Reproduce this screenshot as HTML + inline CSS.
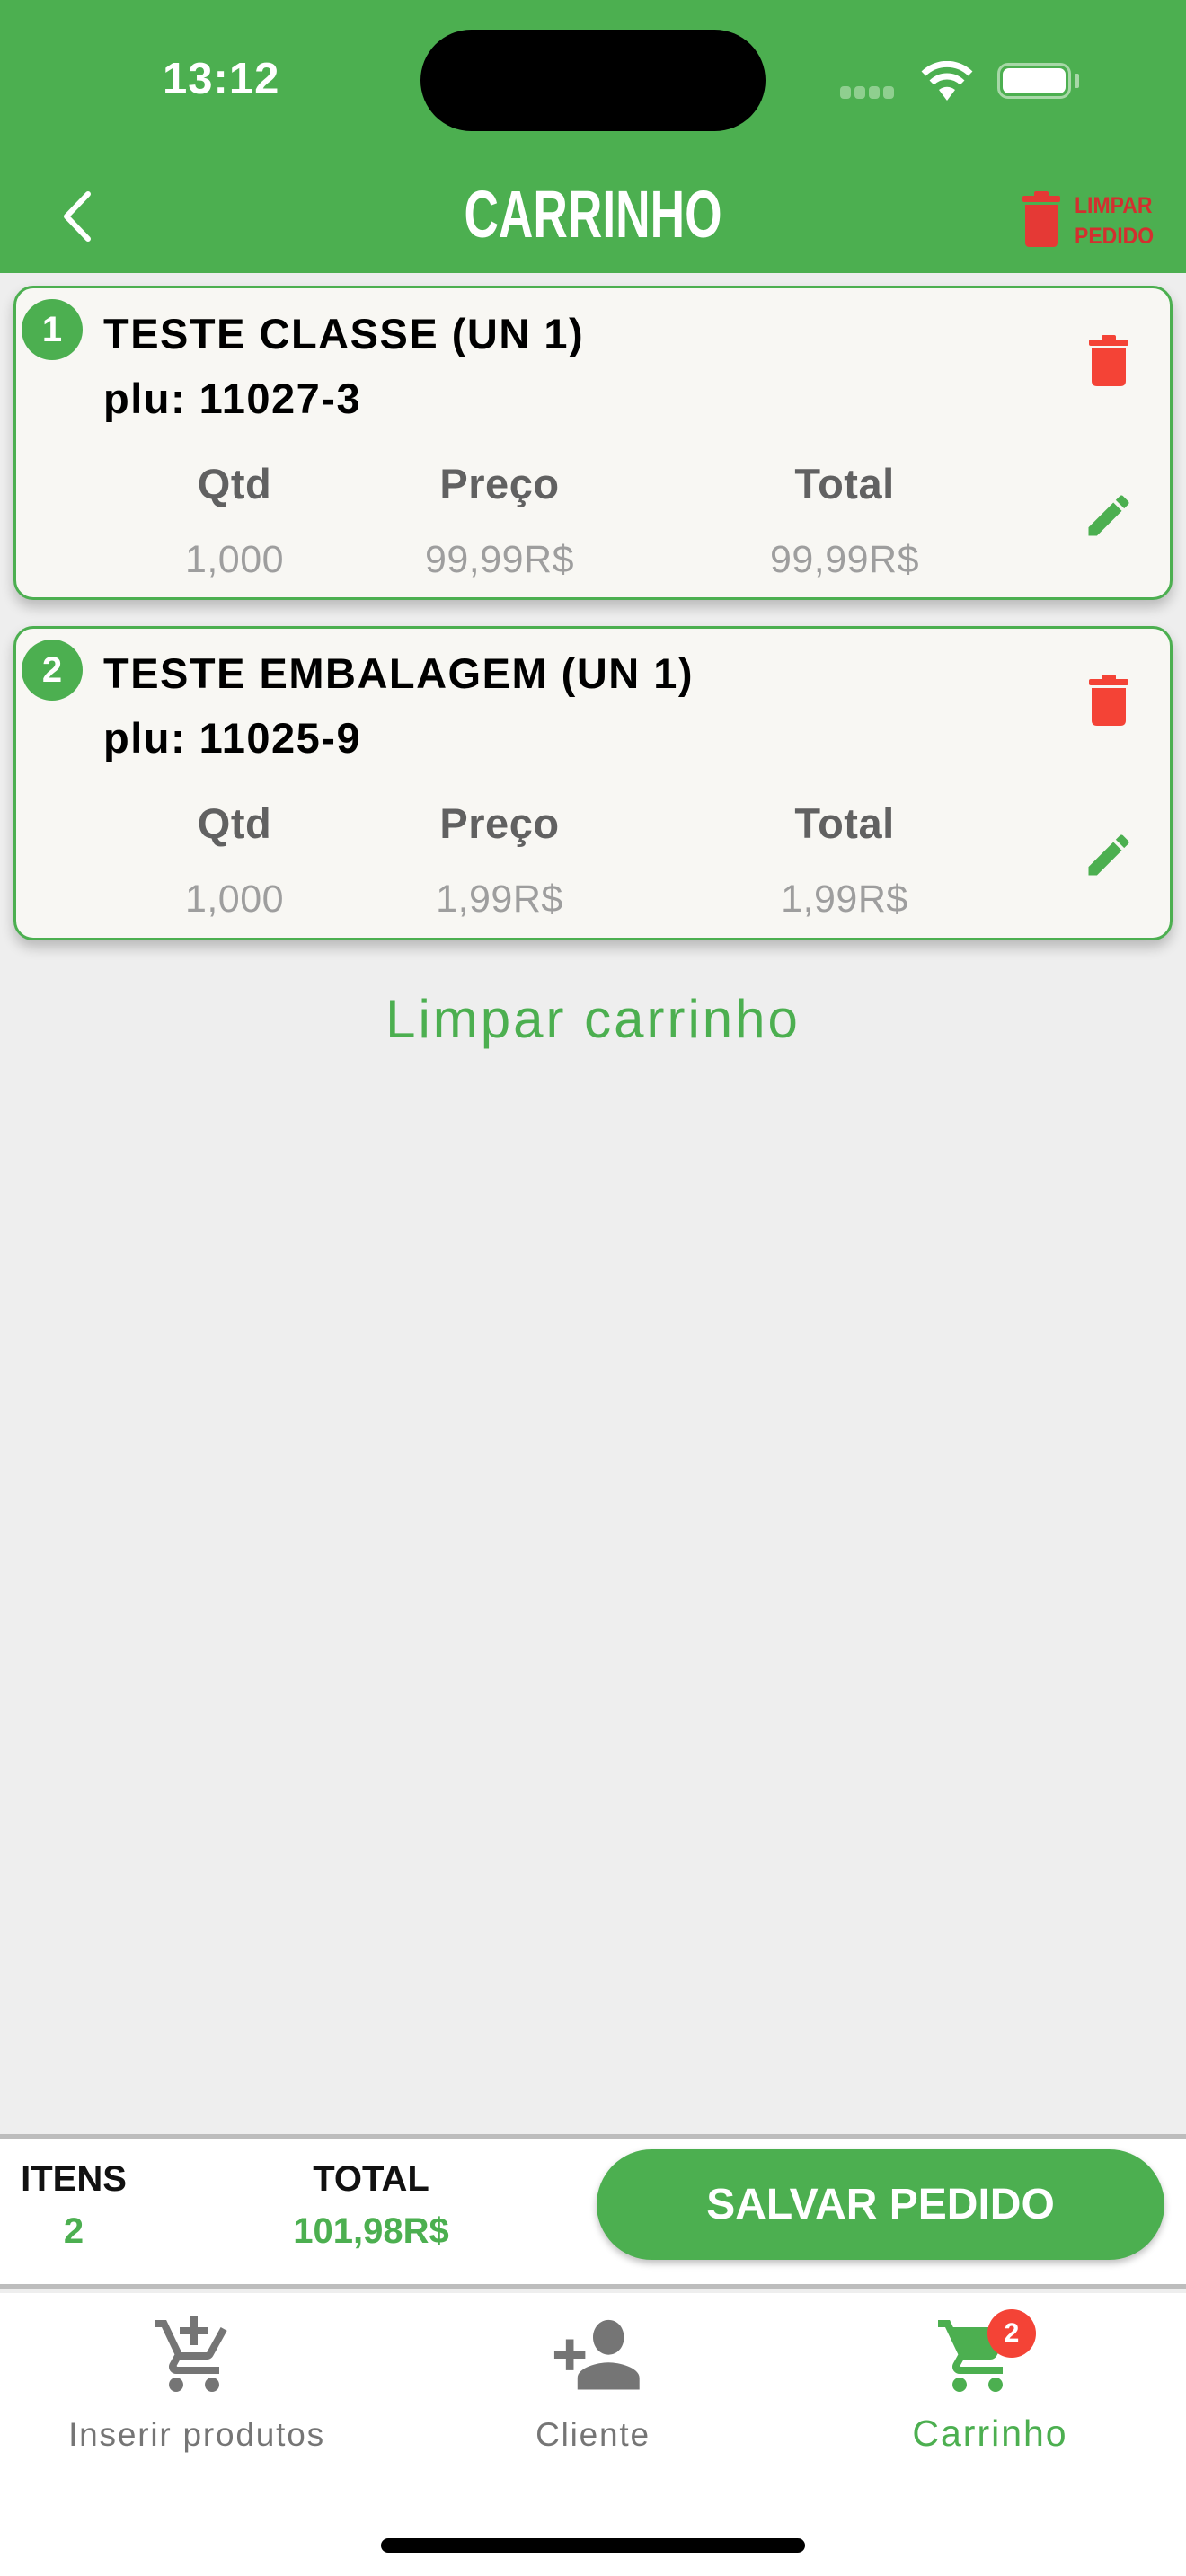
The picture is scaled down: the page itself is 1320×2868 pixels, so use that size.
<!DOCTYPE html>
<html><head><meta charset="utf-8"><style>
*{margin:0;padding:0;box-sizing:border-box}
body{width:1320px;height:2868px;background:#eeeeee;position:relative;overflow:hidden;font-family:"Liberation Sans",sans-serif}
.abs{position:absolute}
.hdr{left:0;top:0;width:1320px;height:304px;background:#4caf50}
.card{left:15px;width:1290px;height:350px;background:#f8f7f3;border:3px solid #4caf50;border-radius:22px;box-shadow:0 8px 14px rgba(0,0,0,0.22)}
.num{width:68px;height:68px;border-radius:50%;background:#4caf50;color:#fff;font-weight:bold;font-size:40px;text-align:center;line-height:68px}
.t{font-weight:bold;font-size:47px;color:#000;white-space:nowrap;letter-spacing:1.5px}
.h{font-weight:bold;font-size:47px;color:#616161;text-align:center;width:300px;margin-left:-150px;letter-spacing:0.5px}
.v{font-size:43px;color:#9e9e9e;text-align:center;width:300px;margin-left:-150px;letter-spacing:0.5px}
.c{text-align:center;white-space:nowrap}
</style></head><body>
<div class="abs hdr"></div>
<div class="abs" style="left:181px;top:60px;font-size:49px;color:#fff;font-weight:bold;letter-spacing:1px">13:12</div>
<div class="abs" style="left:468px;top:33px;width:384px;height:113px;border-radius:57px;background:#000"></div>
<div class="abs" style="left:935px;top:96px;width:60px;height:14px;">
<span style="position:absolute;left:0;width:12px;height:14px;border-radius:4px;background:#8fcf8f"></span>
<span style="position:absolute;left:16px;width:12px;height:14px;border-radius:4px;background:#8fcf8f"></span>
<span style="position:absolute;left:32px;width:12px;height:14px;border-radius:4px;background:#8fcf8f"></span>
<span style="position:absolute;left:48px;width:12px;height:14px;border-radius:4px;background:#8fcf8f"></span></div>
<svg class="abs" style="left:1025px;top:68px" width="58" height="44" viewBox="0 0 58 44"><path d="M29 44 L20 32 A14 14 0 0 1 38 32 Z" fill="#fff"/><path d="M12 24 A24 24 0 0 1 46 24" stroke="#fff" stroke-width="7" fill="none"/><path d="M3 14 A37 37 0 0 1 55 14" stroke="#fff" stroke-width="7" fill="none"/></svg>
<div class="abs" style="left:1110px;top:70px;width:82px;height:40px;border:3px solid #a8d8a8;border-radius:12px;padding:3px"><div style="width:100%;height:100%;background:#fff;border-radius:7px"></div></div>
<div class="abs" style="left:1196px;top:82px;width:5px;height:16px;background:#a8d8a8;border-radius:2px"></div>
<svg class="abs" style="left:68px;top:212px" width="36" height="58" viewBox="0 0 36 58"><path d="M30 4 L6 29 L30 54" stroke="#fff" stroke-width="6" fill="none" stroke-linecap="round" stroke-linejoin="round"/></svg>
<div class="abs c" style="left:460px;top:196px;width:400px;font-size:74px;font-weight:bold;color:#fff;transform:scaleX(0.72)">CARRINHO</div>
<svg class="abs" style="left:1136px;top:212px" width="46" height="64" viewBox="0 0 46 64"><rect x="2" y="6" width="42" height="7" rx="2" fill="#e53935"/><rect x="15" y="1" width="16" height="7" rx="2" fill="#e53935"/><path d="M5 16 H41 V58 Q41 63 36 63 H10 Q5 63 5 58 Z" fill="#e53935"/></svg>
<div class="abs" style="left:1196px;top:212px;font-size:25px;font-weight:bold;color:#d32f2f;line-height:34px;transform:scaleX(0.92);transform-origin:left">LIMPAR<br>PEDIDO</div>

<!-- card 1 -->
<div class="abs card" style="top:318px"></div>
<div class="abs num" style="left:24px;top:333px">1</div>
<div class="abs t" style="left:115px;top:344px">TESTE CLASSE (UN 1)</div>
<div class="abs t" style="left:115px;top:416px">plu: 11027-3</div>
<div class="abs h" style="left:261px;top:511px">Qtd</div>
<div class="abs h" style="left:556px;top:511px">Preço</div>
<div class="abs h" style="left:940px;top:511px">Total</div>
<div class="abs v" style="left:261px;top:599px">1,000</div>
<div class="abs v" style="left:556px;top:599px">99,99R$</div>
<div class="abs v" style="left:940px;top:599px">99,99R$</div>
<svg class="abs" style="left:1210px;top:372px" width="48" height="60" viewBox="0 0 48 60"><rect x="2" y="6" width="44" height="7" rx="2" fill="#f44336"/><rect x="16" y="1" width="16" height="7" rx="2" fill="#f44336"/><path d="M5 16 H43 V52 Q43 58 37 58 H11 Q5 58 5 52 Z" fill="#f44336"/></svg>
<svg class="abs" style="left:1204px;top:544px" width="60" height="60" viewBox="0 0 24 24"><path d="M3 17.25V21h3.75L17.81 9.94l-3.75-3.75L3 17.250zM20.71 7.04a1 1 0 0 0 0-1.41l-2.34-2.34a1 1 0 0 0-1.41 0l-1.83 1.83 3.75 3.75 1.83-1.83z" fill="#4caf50"/></svg>

<!-- card 2 -->
<div class="abs card" style="top:697px"></div>
<div class="abs num" style="left:24px;top:712px">2</div>
<div class="abs t" style="left:115px;top:722px">TESTE EMBALAGEM (UN 1)</div>
<div class="abs t" style="left:115px;top:794px">plu: 11025-9</div>
<div class="abs h" style="left:261px;top:889px">Qtd</div>
<div class="abs h" style="left:556px;top:889px">Preço</div>
<div class="abs h" style="left:940px;top:889px">Total</div>
<div class="abs v" style="left:261px;top:977px">1,000</div>
<div class="abs v" style="left:556px;top:977px">1,99R$</div>
<div class="abs v" style="left:940px;top:977px">1,99R$</div>
<svg class="abs" style="left:1210px;top:750px" width="48" height="60" viewBox="0 0 48 60"><rect x="2" y="6" width="44" height="7" rx="2" fill="#f44336"/><rect x="16" y="1" width="16" height="7" rx="2" fill="#f44336"/><path d="M5 16 H43 V52 Q43 58 37 58 H11 Q5 58 5 52 Z" fill="#f44336"/></svg>
<svg class="abs" style="left:1204px;top:922px" width="60" height="60" viewBox="0 0 24 24"><path d="M3 17.25V21h3.75L17.81 9.94l-3.75-3.75L3 17.25zM20.71 7.04a1 1 0 0 0 0-1.41l-2.34-2.34a1 1 0 0 0-1.41 0l-1.83 1.83 3.75 3.75 1.83-1.83z" fill="#4caf50"/></svg>

<div class="abs c" style="left:0;top:1100px;width:1320px;font-size:60px;color:#4caf50;letter-spacing:3px">Limpar carrinho</div>

<!-- bottom -->
<div class="abs" style="left:0;top:2376px;width:1320px;height:172px;background:#fff;border-top:5px solid #bdbdbd;border-bottom:5px solid #bdbdbd"></div>
<div class="abs c" style="left:0;top:2404px;width:164px;font-size:40px;font-weight:bold;color:#111">ITENS</div>
<div class="abs c" style="left:0;top:2462px;width:164px;font-size:40px;font-weight:bold;color:#4caf50">2</div>
<div class="abs c" style="left:263px;top:2404px;width:300px;font-size:40px;font-weight:bold;color:#111">TOTAL</div>
<div class="abs c" style="left:263px;top:2462px;width:300px;font-size:40px;font-weight:bold;color:#4caf50">101,98R$</div>
<div class="abs c" style="left:664px;top:2393px;width:632px;height:123px;border-radius:62px;background:#4caf50;box-shadow:0 4px 8px rgba(0,0,0,0.25);color:#fff;font-size:48px;font-weight:bold;line-height:123px">SALVAR PEDIDO</div>

<div class="abs" style="left:0;top:2553px;width:1320px;height:315px;background:#fff"></div>
<svg class="abs" style="left:168px;top:2575px" width="96" height="96" viewBox="0 0 24 24"><path d="M11 9h2V6h3V4h-3V1h-2v3H8v2h3v3zm-4 9c-1.1 0-1.99.9-1.99 2S5.9 22 7 22s2-.9 2-2-.9-2-2-2zm10 0c-1.1 0-1.99.9-1.99 2s.89 2 1.99 2 2-.9 2-2-.9-2-2-2zm-9.83-3.25l.03-.12.9-1.63h7.45c.75 0 1.41-.41 1.75-1.03l3.86-7.01L19.42 4h-.01l-1.1 2-2.76 5H8.53l-.13-.27L6.16 6l-.95-2-.94-2H1v2h2l3.6 7.59-1.35 2.45c-.16.28-.25.61-.25.96 0 1.1.9 2 2 2h12v-2H7.42c-.13 0-.25-.11-.25-.25z" fill="#757575"/></svg>
<svg class="abs" style="left:604px;top:2578px" width="112" height="96" viewBox="0 0 26 22"><path d="M17 10c2.2 0 4-1.8 4-4.5S19.2 1 17 1s-4 2-4 4.5S14.8 10 17 10zm-9-1V6H6v3H3v2h3v3h2v-3h3V9H8zm9 3c-2.7 0-8 1.3-8 4v3h16v-3c0-2.7-5.3-4-8-4z" fill="#757575"/></svg>
<svg class="abs" style="left:1040px;top:2575px" width="96" height="96" viewBox="0 0 24 24"><path d="M7 18c-1.1 0-1.99.9-1.99 2S5.9 22 7 22s2-.9 2-2-.9-2-2-2zM1 2v2h2l3.6 7.59-1.35 2.45c-.16.28-.25.61-.25.96 0 1.1.9 2 2 2h12v-2H7.42c-.14 0-.25-.11-.25-.25l.03-.12.9-1.63h7.45c.75 0 1.41-.41 1.75-1.03l3.58-6.49A1 1 0 0 0 20 4H5.21l-.94-2H1zm16 16c-1.1 0-1.99.9-1.99 2s.89 2 1.99 2 2-.9 2-2-.9-2-2-2z" fill="#4caf50"/></svg>
<div class="abs c" style="left:1099px;top:2571px;width:54px;height:54px;border-radius:50%;background:#f44336;color:#fff;font-size:30px;font-weight:bold;line-height:54px">2</div>
<div class="abs c" style="left:19px;top:2690px;width:400px;font-size:37px;color:#757575;letter-spacing:1.8px">Inserir produtos</div>
<div class="abs c" style="left:460px;top:2690px;width:400px;font-size:37px;color:#757575;letter-spacing:1.8px">Cliente</div>
<div class="abs c" style="left:902px;top:2686px;width:400px;font-size:41px;color:#4caf50;letter-spacing:2px">Carrinho</div>
<div class="abs" style="left:424px;top:2826px;width:472px;height:16px;border-radius:8px;background:#000"></div>
</body></html>
